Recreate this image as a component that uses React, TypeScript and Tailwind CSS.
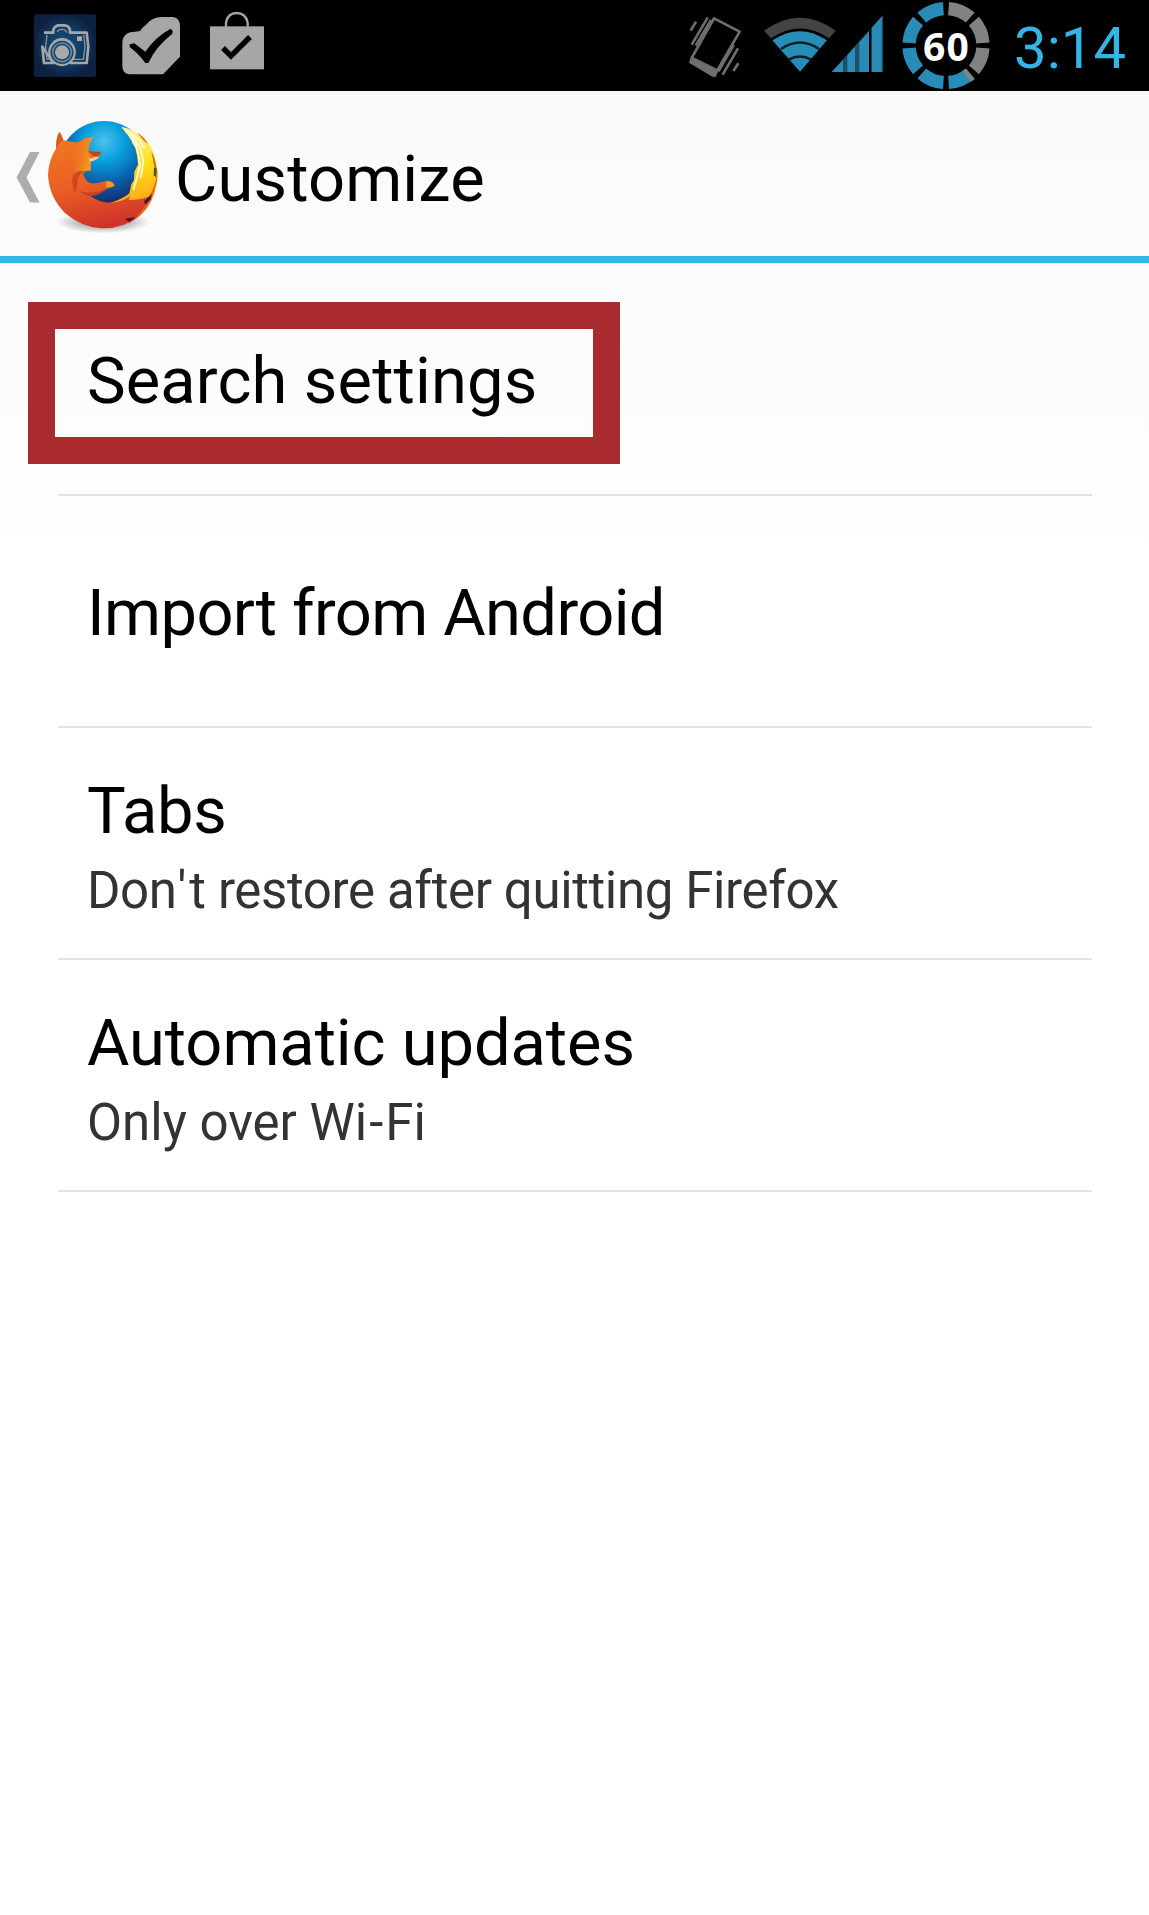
import React from "react";

function CameraIcon() {
  return (
    <svg className="h-[91px] w-[64px]" viewBox="39 0 192 273" fill="none">
      <defs>
        <radialGradient id="camBg">
          <stop offset="0" stopColor="#125280" />
          <stop offset="0.6" stopColor="#113a62" />
          <stop offset="1" stopColor="#0e2240" />
        </radialGradient>
      </defs>
      <rect x="42" y="43" width="186" height="188" rx="6" fill="url(#camBg)" />
      <g stroke="#a6a6a6" strokeWidth="8" strokeLinejoin="round">
        <path d="M72 98 H100 V90 Q103 76 120 76 H132 Q148 76 150 92 V98 H200 L205 140 L200 189 H150 M100 189 H72 L67 140 Z" />
        <path d="M81 104 L77 140 L81 178 H92 M158 178 H190 L195 140 L191 104 M112 96 Q114 88 126 88 Q138 88 140 98" strokeWidth="4" stroke="#8597a5" />
        <circle cx="126" cy="157" r="38" strokeWidth="7" />
        <circle cx="126" cy="157" r="28" stroke="#6f8798" strokeWidth="5" />
        <path d="M100 126 Q126 106 152 126" strokeWidth="5" />
      </g>
      <circle cx="126" cy="157" r="21" fill="#a9a9a9" />
      <rect x="171" y="109" width="15" height="14" fill="#a9a9a9" />
    </svg>
  );
}

function TaskIcon() {
  return (
    <svg className="ml-[24px] h-[91px] w-[60px]" viewBox="303 0 180 273">
      <path
        d="M307 130 Q307 96 345 95 L360 93 Q367 82 378 74 Q396 51 425 51 H458 Q480 53 480 80 V170 L429 223 H328 Q307 221 307 198 Z"
        fill="#a6a6a6"
      />
      <path d="M329 133 L343 130 L376 155 Q407 110 452 86 L458 93 L457 101 Q407 140 385 189 H376 Q355 160 329 141 Z" fill="#000" />
    </svg>
  );
}

function BagIcon() {
  return (
    <svg className="ml-[28px] h-[91px] w-[56px]" viewBox="568 0 168 273">
      <rect x="571" y="79" width="162" height="129" fill="#a6a6a6" />
      <path d="M619 80 V68 Q624 39 651 39 Q678 39 684 68 V80" fill="none" stroke="#a6a6a6" strokeWidth="7" />
      <path d="M610 144 L634 168 L691 111" fill="none" stroke="#000" strokeWidth="16" />
    </svg>
  );
}

function VibrateIcon() {
  return (
    <svg className="h-[91px] w-[54px]" viewBox="53 0 162 273" fill="none" stroke="#6e6e6e" strokeWidth="8">
      <path d="M63 176 L131 55 L208 95 L137 218" strokeLinejoin="round" />
      <path d="M62 168 L146 209 L136 231 L126 230 L56 188 Z" fill="#6e6e6e" stroke="none" />
      <path d="M61 92 L77 65 M64 134 L112 53 M76 137 L122 60" />
      <path d="M144 214 L190 135 M157 224 L203 145 M189 213 L204 190" />
    </svg>
  );
}

function WifiIcon() {
  return (
    <svg className="ml-[21px] h-[91px] w-[74px]" viewBox="279 0 222 273">
      <path d="M282 92 Q390 14 497 92 L477 115 Q390 56 303 115 Z" fill="#444" />
      <path d="M307 121 Q390 66 471 121 L390 215 Z" fill="#288db6" />
      <path d="M333 147 Q390 108 447 147" fill="none" stroke="#06202a" strokeWidth="8" />
      <path d="M356 179 Q390 160 424 179" fill="none" stroke="#06202a" strokeWidth="8" />
    </svg>
  );
}

function SignalIcon() {
  return (
    <svg className="-ml-[6px] h-[91px] w-[54px]" viewBox="483 0 162 273">
      <path d="M485 216 L639 45 V216 Z" fill="#1a5168" />
      <path d="M485 216 L519 180 V216 Z M532 166 L555 140 V216 H532 Z M568 127 L597 94 V216 H568 Z M605 84 L635 50 V216 H605 Z" fill="#288db6" />
      <path d="M597 92 L604 84 V216 H597 Z" fill="#000" />
    </svg>
  );
}

const center = { x: 168, y: 136.5 };

function segment(index: number) {
  const a = ((index * 45 + 4) * Math.PI) / 180;
  const b = ((index * 45 + 41) * Math.PI) / 180;
  const p = (r: number, t: number) =>
    `${(center.x + r * Math.sin(t)).toFixed(1)} ${(center.y - r * Math.cos(t)).toFixed(1)}`;
  return `M${p(131, a)} A131 131 0 0 1 ${p(131, b)} L${p(91, b)} A91 91 0 0 0 ${p(91, a)} Z`;
}

function Battery() {
  return (
    <div className="relative ml-[15px] flex h-[91px] w-[92px] items-center justify-center">
      <svg className="absolute inset-0 h-full w-full" viewBox="30 0 276 273">
        {[0, 1, 2, 3, 4, 5, 6, 7].map((i) => (
          <path key={i} d={segment(i)} fill={i < 3 ? "#828282" : "#288db6"} />
        ))}
        <path d="M217 212 L229 207 L254 238 L242 246 Z" fill="#828282" />
      </svg>
      <span className="relative ml-px text-[39px] leading-[40px] font-bold tracking-[1.3px] text-white font-['Open_Sans',sans-serif]">
        60
      </span>
    </div>
  );
}

function StatusBar() {
  return (
    <div className="flex h-[91px] items-center bg-black pl-[33px]">
      <CameraIcon />
      <TaskIcon />
      <BagIcon />
      <div className="ml-auto flex items-center">
        <VibrateIcon />
        <WifiIcon />
        <SignalIcon />
        <Battery />
        <span className="ml-[22px] w-[135px] pt-[4px] text-[58px] leading-[56px] tracking-[0.1px] text-[#33b5e5]">3:14</span>
      </div>
    </div>
  );
}

function FirefoxLogo() {
  return (
    <svg className="h-[124px] w-[120px]" viewBox="0 0 360 372">
      <defs>
        <radialGradient id="globe" cx="0.5" cy="0.22" r="0.75">
          <stop offset="0" stopColor="#4fc0f0" />
          <stop offset="0.28" stopColor="#08a2df" />
          <stop offset="0.62" stopColor="#0b5da8" />
          <stop offset="1" stopColor="#1b1d55" />
        </radialGradient>
        <linearGradient id="fox" x1="0.25" y1="0" x2="0.45" y2="1">
          <stop offset="0" stopColor="#ee7a22" />
          <stop offset="0.55" stopColor="#ea5f24" />
          <stop offset="1" stopColor="#cf3229" />
        </linearGradient>
        <linearGradient id="tail" x1="0.3" y1="0" x2="0.4" y2="1">
          <stop offset="0" stopColor="#fdf3a0" />
          <stop offset="0.4" stopColor="#ffe11a" />
          <stop offset="0.7" stopColor="#fbb416" />
          <stop offset="1" stopColor="#e85c25" />
        </linearGradient>
        <radialGradient id="shade">
          <stop offset="0" stopColor="#555" stopOpacity="0.8" />
          <stop offset="1" stopColor="#555" stopOpacity="0" />
        </radialGradient>
        <linearGradient id="ear" x1="0" y1="0" x2="1" y2="0.4">
          <stop offset="0" stopColor="#ec6a24" stopOpacity="0" />
          <stop offset="1" stopColor="#f4a31f" />
        </linearGradient>
      </defs>
      <ellipse cx="178" cy="318" rx="140" ry="34" fill="url(#shade)" />
      <circle cx="180" cy="152" r="137" fill="url(#globe)" />
      {/* tail sweeping round the right side of the globe */}
      <path
        d="M232 32 Q272 40 305 70 Q330 100 338 150 Q344 178 338 205 Q330 260 290 298 Q250 332 180 337 L196 262 Q240 248 256 232 L262 205 L270 192 L271 168 L282 145 L279 118 L274 96 L264 80 L262 68 L246 52 Z"
        fill="url(#tail)"
      />
      <path d="M254 56 L276 88 L284 120 L288 150 L280 180 L268 222 M246 44 L282 68 L302 96 M262 56 L290 96 L298 140 L290 186" stroke="#fffbe0" strokeWidth="6" fill="none" opacity="0.9" />
      <path d="M280 50 Q300 62 312 84 Q298 74 280 50Z M322 104 Q340 140 338 178 Q328 144 322 104Z" fill="#d86c20" />
      <path d="M340 160 Q344 200 322 250 Q300 300 250 325 Q270 280 300 262 Q336 222 340 160Z" fill="#e05524" opacity="0.75" />
      {/* head and body */}
      <path
        d="M36 98 Q36 64 46 48 Q54 56 58 72 Q78 80 104 78 Q124 62 150 62 Q134 78 134 102 L142 106 L172 108 Q170 120 152 132 L142 136 Q136 142 140 164 Q124 162 118 174 Q124 196 140 202 Q164 204 182 196 Q202 190 212 208 Q206 216 188 218 Q172 232 140 240 Q166 260 200 260 Q236 258 258 240 L254 252 Q294 252 318 240 Q294 300 240 326 Q206 338 172 337 Q110 332 62 290 Q16 244 12 178 Q14 130 36 98Z"
        fill="url(#fox)"
      />
      <path d="M80 94 Q116 66 150 62 Q134 80 132 108 L140 130 L140 164 Q118 160 98 182 Z" fill="url(#ear)" />
      <path d="M36 98 Q36 64 46 48 Q54 56 58 72 Q44 82 36 98Z" fill="#d85a26" />
      <path d="M132 106 L172 108 Q168 120 152 122 Z" fill="#b8481f" />
      <path d="M134 130 L154 122 L166 124 Q156 134 140 137Z" fill="#f7cda8" />
      <path d="M86 208 Q78 174 108 164 L122 166 Q98 178 100 206 Q96 222 92 232Z" fill="#c43f22" opacity="0.8" />
      <path d="M104 224 Q140 238 186 218 Q170 240 134 240 Q116 236 104 224Z" fill="#c23a22" opacity="0.75" />
      <path d="M186 198 Q204 192 212 208 Q204 216 186 214Z" fill="#f79a1f" />
      <path d="M330 154 L338 158 L336 184 L329 178Z" fill="#41562f" />
      <path d="M300 256 L324 234 L320 250 L304 266Z M242 308 L276 304 L256 318Z" fill="#3d1838" />
    </svg>
  );
}

function Header() {
  return (
    <header className="flex h-[172px] items-center border-b-[7px] border-[#33b5e5] bg-gradient-to-b from-[#f9f9f9] to-[#fcfcfc]">
      <svg className="ml-[16px] h-[52px] w-[24px] shrink-0 translate-y-[3px]" viewBox="0 0 24 52">
        <path d="M0.5 26.5 L14 1 H23.5 L10.5 26.5 L23.5 51.5 H14 Z" fill="#adadad" />
      </svg>
      <div className="ml-[4px] shrink-0 translate-y-[4px]">
        <FirefoxLogo />
      </div>
      <h1 className="ml-[11px] pt-[10px] text-[65px] leading-[72px] tracking-[0.16px]">Customize</h1>
    </header>
  );
}

type Item = {
  title: string;
  titleClass: string;
  detail?: React.ReactNode;
  highlighted?: boolean;
};

const items: Item[] = [
  { title: "Search settings", titleClass: "tracking-[0.15px]", highlighted: true },
  { title: "Import from Android", titleClass: "tracking-[-0.6px]" },
  {
    title: "Tabs",
    titleClass: "tracking-[-0.3px]",
    detail: (
      <span className="tracking-[-0.37px]">
        Do<span className="tracking-[3px]">n'</span>t restore after quitting Firefox
      </span>
    ),
  },
  {
    title: "Automatic updates",
    titleClass: "tracking-[-0.05px]",
    detail: (
      <span>
        Only over W<span className="tracking-[2px]">i-</span>Fi
      </span>
    ),
  },
];

function Row({ item }: { item: Item }) {
  return (
    <li className="relative flex h-[232px] flex-col justify-center border-b-2 border-[#e3e3e3] pl-[29.5px]">
      {item.highlighted && (
        <div className="absolute top-[38px] -left-[30px] h-[162px] w-[592px] border-[27px] border-[#a92b2f]" />
      )}
      <div className={`text-[65px] leading-[72px] whitespace-nowrap ${item.titleClass} ${item.detail ? "pt-[1px]" : "pt-[3px]"}`}>
        {item.title}
      </div>
      {item.detail && (
        <div className="mt-[14px] mb-[-9px] text-[51px] leading-[60px] whitespace-nowrap text-[#333]">
          {item.detail}
        </div>
      )}
    </li>
  );
}

export default function App() {
  return (
    <div className="flex h-[1915px] w-[1149px] flex-col overflow-hidden bg-white font-[Roboto,sans-serif] text-black">
      <StatusBar />
      <Header />
      <main className="flex-1 bg-[linear-gradient(#fbfbfb,#fdfdfd_180px,#ffffff_300px)] pt-px">
        <ul className="mx-[57.5px]">
          {items.map((item) => (
            <Row key={item.title} item={item} />
          ))}
        </ul>
      </main>
    </div>
  );
}
